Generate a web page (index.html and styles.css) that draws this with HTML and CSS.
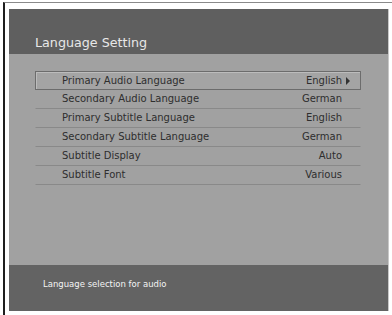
FILE: index.html
```html
<!DOCTYPE html>
<html>
<head>
<meta charset="utf-8">
<link rel="stylesheet" href="styles.css">
</head>
<body>
<div class="frame">
  <div class="screen">
    <div class="header"><span class="title">Language Setting</span></div>
    <div class="content">
      <ul class="menu">
        <li class="row selected"><span class="label">Primary Audio Language</span><span class="value">English</span><span class="slot"><span class="arrow"></span></span></li>
        <li class="row"><span class="label">Secondary Audio Language</span><span class="value">German</span><span class="slot"></span></li>
        <li class="row"><span class="label">Primary Subtitle Language</span><span class="value">English</span><span class="slot"></span></li>
        <li class="row"><span class="label">Secondary Subtitle Language</span><span class="value">German</span><span class="slot"></span></li>
        <li class="row"><span class="label">Subtitle Display</span><span class="value">Auto</span><span class="slot"></span></li>
        <li class="row"><span class="label">Subtitle Font</span><span class="value">Various</span><span class="slot"></span></li>
      </ul>
    </div>
    <div class="footer"><span class="hint">Language selection for audio</span></div>
  </div>
</div>
</body>
</html>
```

FILE: styles.css
```css
html, body {
  margin: 0;
  padding: 0;
  background: #ffffff;
}
body {
  width: 392px;
  height: 315px;
  overflow: hidden;
  font-family: "DejaVu Sans", Verdana, sans-serif;
}
.frame {
  margin: 2px 0 0 3px;
  height: 313px;
  border-top: 1px solid #8a8a8a;
  border-left: 2px solid #1e1e1e;
  padding: 6px 0 0 4px;
  box-sizing: border-box;
}
.screen {
  width: 379px;
  height: 302px;
  display: flex;
  flex-direction: column;
  background: #a1a1a1;
  border-right: 1px solid #c8c8c8;
}
.header {
  height: 45px;
  box-sizing: border-box;
  padding: 26px 0 0 26px;
  background: #5f5f5f;
}
.title {
  display: block;
  font-size: 12.7px;
  line-height: 15px;
  color: #e8e8e8;
}
.content {
  flex: 1;
  padding: 17px 27px 0 26px;
}
.menu {
  list-style: none;
  margin: 0;
  padding: 0;
}
.row {
  display: flex;
  align-items: center;
  height: 18px;
  font-size: 10px;
  line-height: 18px;
  color: #2e2e2e;
  border-left: 1px solid transparent;
  border-right: 1px solid transparent;
  border-bottom: 1px solid #898989;
  padding: 0 10px 0 26px;
}
.row.selected {
  height: 17px;
  border: 1px solid #6c6c6c;
  box-shadow: inset 1px 1px 0 #bcbcbc;
  background: #a4a4a4;
}
.label {
  flex: 1;
}
.value {
  text-align: right;
}
.slot {
  width: 8px;
  display: flex;
  align-items: center;
  justify-content: flex-end;
}
.arrow {
  width: 0;
  height: 0;
  border-top: 4px solid transparent;
  border-bottom: 4px solid transparent;
  border-left: 4px solid #333333;
}
.footer {
  height: 46px;
  box-sizing: border-box;
  padding: 7px 0 0 34px;
  background: #636363;
}
.hint {
  font-size: 8.5px;
  line-height: 12px;
  color: #f4f4f4;
}
```
